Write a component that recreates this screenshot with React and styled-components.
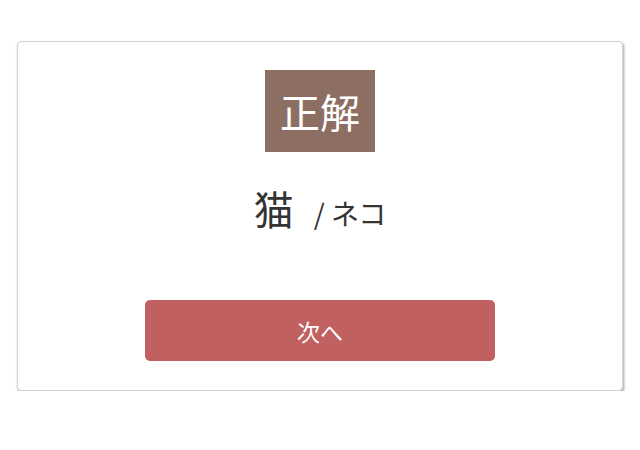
import React from "react";
import styled, { createGlobalStyle } from "styled-components";

const Global = createGlobalStyle`
  html, body { margin: 0; padding: 0; background: #fff; }
  body {
    font-family: "Noto Sans CJK JP", "Noto Sans", sans-serif;
    color: #333;
  }
`;

const Page = styled.div`
  padding: 41px 17px 0 17px;
`;

const Card = styled.div`
  background: #fff;
  border: 1px solid #d2d2d2;
  border-radius: 4px;
  box-shadow: 1px 2px 3px rgba(0, 0, 0, 0.35);
  padding: 28px 0 29px;
  display: flex;
  flex-direction: column;
  align-items: center;
`;

const Badge = styled.div`
  background: #8d6e63;
  color: #fff;
  font-size: 40px;
  line-height: 82px;
  height: 82px;
  width: 110px;
  text-align: center;
`;

const Answer = styled.div`
  margin-top: 29px;
  height: 54px;
  display: flex;
  align-items: baseline;
  gap: 20px;
  color: #333;
`;

const Word = styled.span`
  font-size: 40px;
  line-height: 54px;
`;

const Reading = styled.span`
  font-size: 28px;
  line-height: 54px;
`;

const NextButton = styled.button`
  margin-top: 65px;
  width: 350px;
  height: 61px;
  border: none;
  border-radius: 5px;
  background: #c06060;
  color: #fff;
  font-family: inherit;
  font-size: 23px;
  cursor: pointer;
`;

export default function App() {
  return (
    <>
      <Global />
      <Page>
        <Card>
          <Badge>正解</Badge>
          <Answer>
            <Word>猫</Word>
            <Reading>/ ネコ</Reading>
          </Answer>
          <NextButton>次へ</NextButton>
        </Card>
      </Page>
    </>
  );
}
